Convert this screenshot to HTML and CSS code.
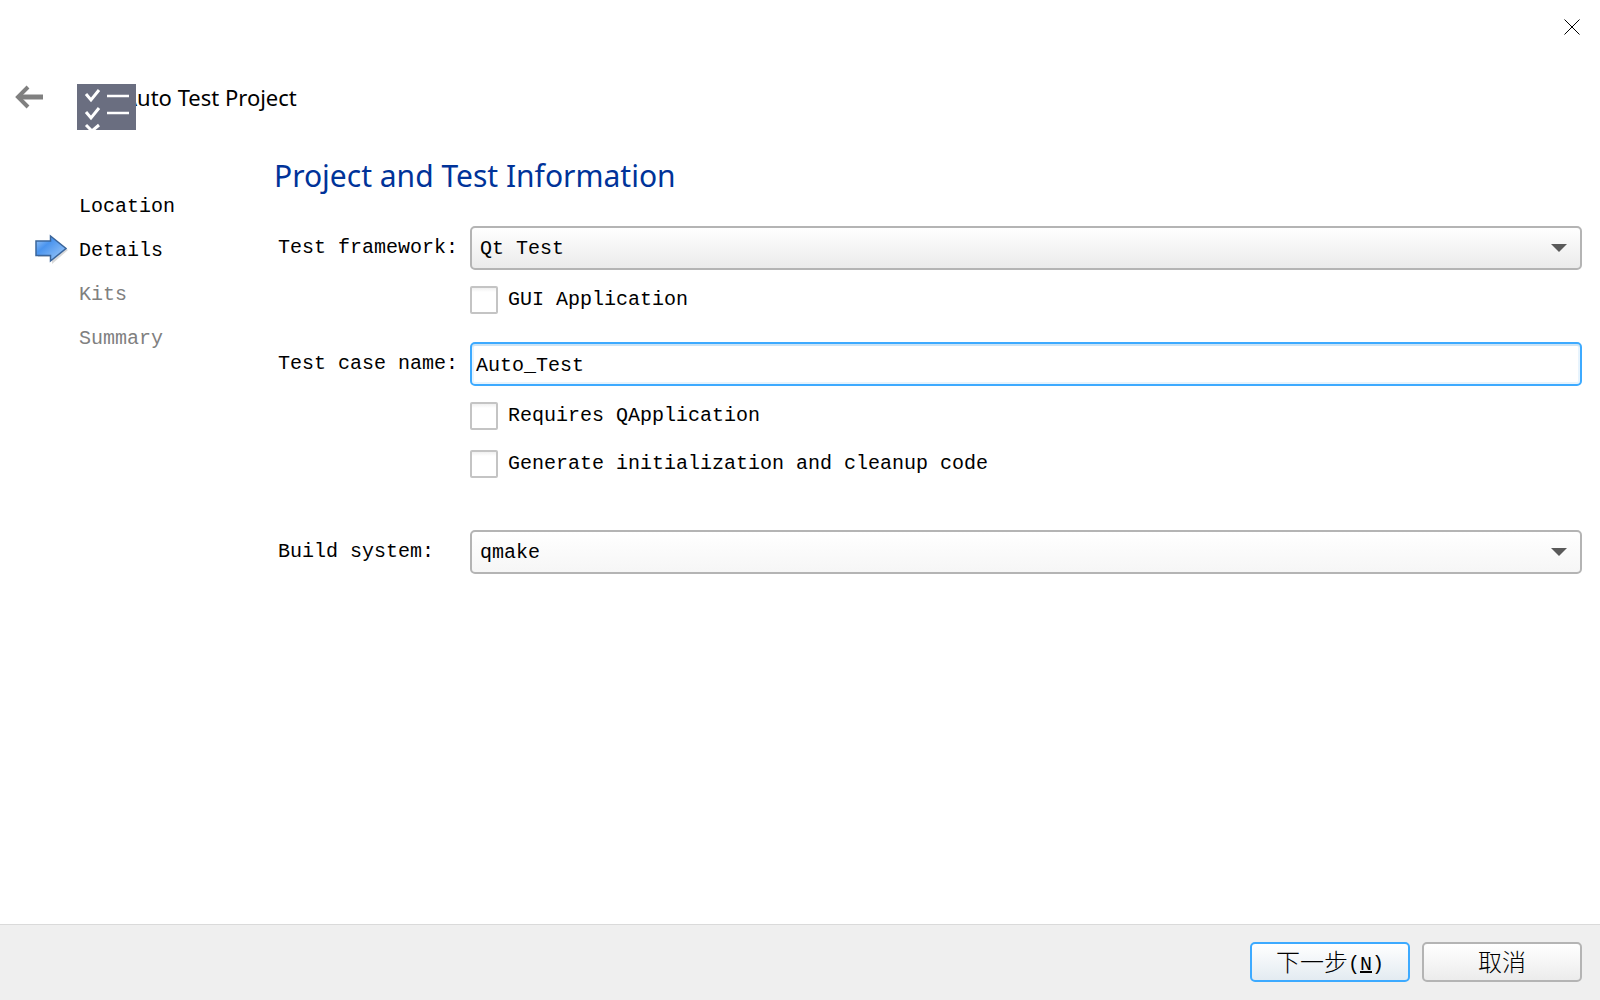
FILE: index.html
```html
<!DOCTYPE html>
<html lang="en">
<head>
    <meta charset="UTF-8">
    <meta name="viewport" content="width=device-width, initial-scale=1.0">
    <title>Auto Test Project</title>
    <link rel="stylesheet" href="styles.css">
</head>
<body>
    <div class="titlebar">
        <button type="button" class="icon-button" aria-label="Close">
            <svg width="16" height="16" viewBox="0 0 16 16">
                <path d="M0.5 0.5L15.5 15.5M15.5 0.5L0.5 15.5" fill="none" stroke="#000" stroke-width="1"/>
            </svg>
        </button>
    </div>

    <header class="header">
        <button type="button" class="icon-button" aria-label="Back">
            <svg width="28" height="24" viewBox="0 0 28 24">
                <path d="M4 12H28" fill="none" stroke="#808080" stroke-width="5"/>
                <path d="M13 2L3 12L13 22" fill="none" stroke="#808080" stroke-width="4"/>
            </svg>
        </button>
        <svg class="project-icon" width="59" height="46" viewBox="0 0 59 46">
            <rect width="59" height="46" fill="#6a6e80"/>
            <g fill="none" stroke="#fff" stroke-width="3">
                <path d="M9 10L14 16L22 6"/>
                <path d="M9 28L14 34L22 24"/>
                <path d="M9 41L15 47L22 41"/>
                <path d="M30 12H52M30 29H52" stroke-width="2.5"/>
            </g>
        </svg>
        <span class="project-title">Auto Test Project</span>
    </header>

    <main class="wizard">
        <ol class="steps">
            <li>Location</li>
            <li class="current">
                <svg width="34" height="30" viewBox="0 0 34 30">
                    <defs>
                        <linearGradient id="arrowFill" x1="0" y1="0" x2="1" y2="1">
                            <stop offset="0" stop-color="#a4ccf8"/>
                            <stop offset="0.35" stop-color="#4a94ee"/>
                            <stop offset="1" stop-color="#a8cffa"/>
                        </linearGradient>
                    </defs>
                    <path d="M3 9H17V3L33 16L17 30V23H3Z" fill="#000" opacity="0.15"/>
                    <path d="M1 7H15.5V2L31 14.5L15.5 27V21.5H1Z" fill="url(#arrowFill)" stroke="#3a659b" stroke-width="1.5"/>
                </svg>
                Details
            </li>
            <li class="pending">Kits</li>
            <li class="pending">Summary</li>
        </ol>

        <form class="details" id="details">
            <h1>Project and Test Information</h1>
            <div class="fields">
                <label for="framework">Test framework:</label>
                <div class="combo">
                    <select id="framework">
                        <option>Qt Test</option>
                    </select>
                    <svg width="16" height="8" viewBox="0 0 16 8"><path d="M0 0H16L8 8Z" fill="#5a5a5a"/></svg>
                </div>

                <label class="check"><input type="checkbox">GUI Application</label>

                <label for="caseName">Test case name:</label>
                <input type="text" id="caseName" value="Auto_Test" spellcheck="false">

                <label class="check"><input type="checkbox">Requires QApplication</label>
                <label class="check"><input type="checkbox">Generate initialization and cleanup code</label>

                <label class="build" for="buildSystem">Build system:</label>
                <div class="combo build">
                    <select id="buildSystem">
                        <option>qmake</option>
                    </select>
                    <svg width="16" height="8" viewBox="0 0 16 8"><path d="M0 0H16L8 8Z" fill="#5a5a5a"/></svg>
                </div>
            </div>
        </form>
    </main>

    <footer class="footer" lang="zh-CN">
        <button type="submit" form="details" class="next">下一步<span class="key">(<u>N</u>)</span></button>
        <button type="button">取消</button>
    </footer>
</body>
</html>
```

FILE: styles.css
```css
* {
    box-sizing: border-box;
}
body {
    display: flex;
    flex-direction: column;
    min-height: 100vh;
    margin: 0;
    background: #fff;
    color: #000;
    font-family: "Liberation Mono", "Noto Sans CJK SC", monospace;
    font-size: 20px;
    line-height: 28px;
}
button, select, input {
    font: inherit;
    color: inherit;
}
svg {
    display: block;
}
.titlebar {
    display: flex;
    justify-content: flex-end;
    padding: 19px 20px;
}
.icon-button {
    padding: 0;
    border: 0;
    background: none;
}
.header {
    display: flex;
    align-items: center;
    height: 48px;
    margin-top: 19px;
    padding-left: 15px;
}
.project-icon {
    flex: none;
    z-index: 1;
    margin: 20px 0 0 34px;
}
.project-title {
    margin-left: -13px;
    font-family: "Noto Sans", sans-serif;
    font-size: 22px;
}
.wizard {
    display: flex;
    flex: 1;
    padding: 32px 18px 0 35px;
}
.steps {
    width: 239px;
    margin: 32px 0 0;
    padding: 0;
    list-style: none;
}
.steps li {
    display: flex;
    align-items: center;
    height: 44px;
    padding-left: 44px;
}
.steps .current {
    gap: 10px;
    padding-left: 0;
}
.steps svg {
    margin-bottom: 4px;
}
.steps .pending {
    color: #808080;
}
.details {
    flex: 1;
}
h1 {
    margin: 0 0 27px;
    color: #003399;
    font-family: "Noto Sans", sans-serif;
    font-size: 30px;
    font-weight: 400;
    line-height: 46px;
}
.fields {
    display: grid;
    grid-template-columns: 180px 1fr;
    column-gap: 12px;
    row-gap: 16px;
    align-items: center;
    padding-left: 4px;
}
.fields label {
    white-space: nowrap;
}
.combo {
    display: grid;
    align-items: center;
}
.combo select, .combo svg {
    grid-area: 1 / 1;
}
.combo svg {
    justify-self: end;
    margin-right: 15px;
    pointer-events: none;
}
select {
    width: 100%;
    height: 44px;
    padding: 2px 8px 0;
    border: 2px solid #b4b4b4;
    border-radius: 5px;
    background: linear-gradient(#fff, #ebebeb);
    appearance: none;
}
#buildSystem {
    background: linear-gradient(#fff, #f6f6f6);
}
input[type="text"] {
    width: 100%;
    height: 44px;
    margin-top: 12px;
    padding: 2px 4px 0;
    border: 2px solid #3daaff;
    border-radius: 5px;
    outline: none;
    box-shadow: inset 0 2px #cde4f5, inset 0 0 0 2px #e8f4fd;
}
label[for="caseName"] {
    margin-top: 12px;
}
.check {
    display: flex;
    grid-column: 2;
    align-items: center;
    gap: 10px;
}
.check + .check {
    margin-top: 4px;
}
input[type="checkbox"] {
    width: 28px;
    height: 28px;
    margin: 0;
    border: 2px solid #c4c4c4;
    border-radius: 2px;
    background: linear-gradient(#f0f0f0, #fff 4px);
    appearance: none;
}
.build {
    margin-top: 36px;
}
.footer {
    display: flex;
    justify-content: flex-end;
    gap: 12px;
    height: 76px;
    padding: 17px 18px;
    border-top: 1px solid #dadada;
    background: #efefef;
}
.footer button {
    display: flex;
    align-items: center;
    justify-content: center;
    width: 160px;
    height: 40px;
    padding: 5px 0 0;
    border: 2px solid #b4b4b4;
    border-radius: 5px;
    background: linear-gradient(#fff, #ececec);
    font-size: 24px;
    font-weight: 300;
}
.footer .next {
    border-color: #3daaff;
    background: linear-gradient(#fff, #e3ebf1);
}
.key {
    font-size: 20px;
}
```
